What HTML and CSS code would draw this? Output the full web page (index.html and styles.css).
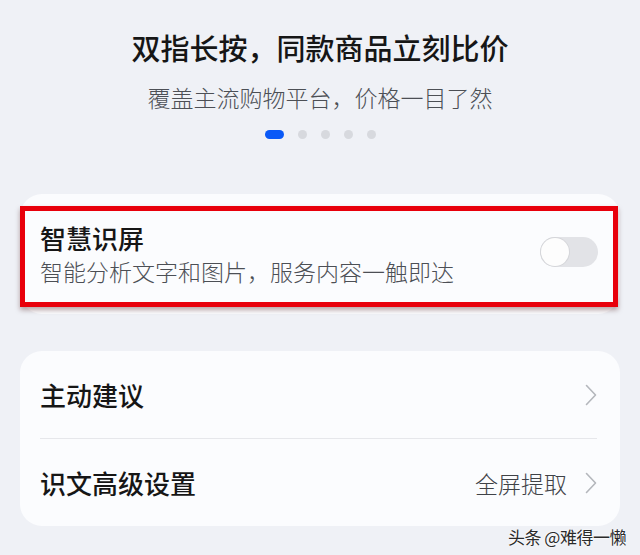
FILE: index.html
```html
<!DOCTYPE html>
<html lang="zh-CN">
<head>
    <meta charset="UTF-8">
    <meta name="viewport" content="width=device-width, initial-scale=1.0">
    <title>智慧识屏</title>
    <link rel="stylesheet" href="styles.css">
</head>
<body>
    <div class="intro">
        <h1>双指长按，同款商品立刻比价</h1>
        <p>覆盖主流购物平台，价格一目了然</p>
        <div class="dots">
            <span class="dot active"></span>
            <span class="dot"></span>
            <span class="dot"></span>
            <span class="dot"></span>
            <span class="dot"></span>
        </div>
    </div>

    <div class="card card-switch">
        <div class="row-text">
            <div class="row-title">智慧识屏</div>
            <div class="row-desc">智能分析文字和图片，服务内容一触即达</div>
        </div>
        <div class="toggle"><span class="knob"></span></div>
        <div class="highlight"></div>
    </div>

    <div class="card card-list">
        <div class="list-row">
            <span class="row-title">主动建议</span>
            <span class="row-end">
                <svg class="chevron" viewBox="0 0 12 22" width="12" height="22"><path d="M1.5 1.5 L10.5 11 L1.5 20.5" fill="none" stroke="#b4b7bc" stroke-width="1.6" stroke-linecap="round" stroke-linejoin="round"/></svg>
            </span>
        </div>
        <div class="list-row">
            <span class="row-title">识文高级设置</span>
            <span class="row-end">
                <span class="row-value">全屏提取</span>
                <svg class="chevron" viewBox="0 0 12 22" width="12" height="22"><path d="M1.5 1.5 L10.5 11 L1.5 20.5" fill="none" stroke="#b4b7bc" stroke-width="1.6" stroke-linecap="round" stroke-linejoin="round"/></svg>
            </span>
        </div>
    </div>

    <div class="watermark">头条 @难得一懒</div>
</body>
</html>
```

FILE: styles.css
```css
:root {
    --page-bg: #eff1f6;
    --card-bg: #fbfcfe;
    --text-main: #161616;
    --text-sub: #4c4f55;
    --accent: #0a59f7;
    --mark-red: #e8000b;
}

body {
    margin: 0;
    background-color: var(--page-bg);
    font-family: "Noto Sans CJK SC", "Noto Sans", sans-serif;
    color: var(--text-main);
    height: 555px;
    overflow: hidden;
    position: relative;
}

.intro {
    padding-top: 27px;
    text-align: center;
}
.intro h1 {
    margin: 0;
    font-size: 29px;
    line-height: 40px;
    font-weight: 500;
}
.intro p {
    margin: 14px 0 0;
    font-size: 23px;
    line-height: 32px;
    font-weight: 300;
    color: var(--text-sub);
}

.dots {
    display: flex;
    justify-content: center;
    gap: 14px;
    margin-top: 17px;
}
.dot {
    width: 9px;
    height: 9px;
    border-radius: 50%;
    background-color: #d7d9de;
}
.dot.active {
    width: 19px;
    border-radius: 5px;
    background-color: var(--accent);
}

.card {
    margin: 0 20px;
    background-color: var(--card-bg);
    border-radius: 22px;
}

.card-switch {
    position: relative;
    margin-top: 55px;
    height: 120px;
    padding: 0 22px 0 20px;
    display: flex;
    align-items: center;
    justify-content: space-between;
}
.row-title {
    font-size: 26px;
    line-height: 34px;
    font-weight: 500;
}
.row-desc {
    font-size: 23px;
    line-height: 32px;
    font-weight: 300;
    color: var(--text-sub);
}

.toggle {
    position: relative;
    width: 58px;
    height: 30px;
    border-radius: 15px;
    background-color: #e2e3e7;
    margin-top: -4px;
}
.knob {
    position: absolute;
    left: 1px;
    top: 1px;
    width: 28px;
    height: 28px;
    border-radius: 50%;
    background-color: #fdfdfd;
    box-shadow: 0 0 0 1px #d5d6da;
}

/* red annotation frame drawn over the switch row */
.highlight {
    position: absolute;
    left: 0;
    right: 2px;
    top: 12px;
    bottom: 7px;
    border: 5px solid var(--mark-red);
    box-shadow: 0 3px 5px rgba(60, 0, 0, 0.35);
    pointer-events: none;
}

.card-list {
    margin-top: 37px;
    padding: 0 23px 0 20px;
}
.list-row {
    height: 87px;
    display: flex;
    align-items: center;
    justify-content: space-between;
}
.list-row + .list-row {
    border-top: 1px solid #e6e7eb;
}
.row-end {
    display: flex;
    align-items: center;
    gap: 18px;
}
.row-value {
    font-size: 23px;
    font-weight: 300;
    color: #3f4247;
}
.chevron {
    display: block;
}

.watermark {
    position: absolute;
    left: 508px;
    top: 526px;
    font-size: 17px;
    line-height: 22px;
    color: #2a2a2a;
    text-shadow: 0 0 2px #fff, 0 0 2px #fff;
    letter-spacing: -0.5px;
}
```
